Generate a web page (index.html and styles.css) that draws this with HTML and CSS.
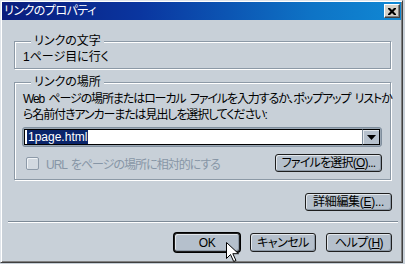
FILE: index.html
```html
<!DOCTYPE html>
<html lang="ja">
<head>
  <meta charset="UTF-8">
  <title>リンクのプロパティ</title>
  <link rel="stylesheet" href="styles.css">
</head>
<body>
  <div class="window">
    <div class="titlebar">
      <span class="title">リンクのプロパティ</span>
      <span class="close">
        <svg width="8" height="7" viewBox="0 0 8 7"><path d="M0 0h2l2 2 2-2h2v1l-2.5 2.5L8 6v1H6L4 5 2 7H0V6l2.5-2.5L0 1z" fill="#000"/></svg>
      </span>
    </div>

    <fieldset class="group group-text">
      <legend>リンクの文字</legend>
      <div class="group-value">1ページ目に行く</div>
    </fieldset>

    <fieldset class="group group-place">
      <legend>リンクの場所</legend>
      <p class="desc">Web ページの場所またはローカル ファイルを入力するか、ポップアップ リストか<br>ら名前付きアンカーまたは見出しを選択してください:</p>
      <div class="combo">
        <div class="combo-field"><span class="selected">1page.html</span></div>
        <span class="combo-btn">
          <svg width="9" height="5" viewBox="0 0 9 5"><path d="M0 0h9L4.5 5z" fill="#000"/></svg>
        </span>
      </div>
      <div class="option-row">
        <label class="check is-disabled"><span class="check-box"></span>URL をページの場所に相対的にする</label>
        <button class="btn btn-browse">ファイルを選択(<u>O</u>)...</button>
      </div>
    </fieldset>

    <div class="advanced-row">
      <button class="btn btn-advanced">詳細編集(<u>E</u>)...</button>
    </div>

    <div class="separator"></div>

    <div class="footer">
      <button class="btn btn-dialog btn-default">OK</button>
      <button class="btn btn-dialog">キャンセル</button>
      <button class="btn btn-dialog">ヘルプ(<u>H</u>)</button>
    </div>

    <!-- mouse pointer over the OK button -->
    <svg class="pointer" width="13" height="21" viewBox="0 0 13 21">
      <path d="M0.5 0.5v16l4-4 3.2 7 2.3-1-3.2-6.8h5.7z" fill="#fff" stroke="#000" stroke-width="1"/>
    </svg>
  </div>
</body>
</html>
```

FILE: styles.css
```css
* {
  box-sizing: border-box;
}

body {
  margin: 0;
  background-color: #c8d0d8;
  font-family: "Liberation Sans", "Noto Sans CJK JP", sans-serif;
  font-size: 12px;
  font-feature-settings: "palt";
  color: #000;
}

.window {
  position: relative;
  width: 403px;
  height: 263px;
  background-color: #c8d0d8;
  border: 1px solid;
  border-color: #dfe4ea #404040 #404040 #dfe4ea;
  box-shadow: inset 1px 1px #fff, inset -1px -1px #808080;
  padding: 1px;
  overflow: hidden;
}

.titlebar {
  display: flex;
  align-items: center;
  justify-content: space-between;
  height: 18px;
  padding: 0 1px 0 2px;
  background: linear-gradient(to right, #0a1c7c 0%, #0a36a0 35%, #0e74c6 78%, #1088d4 100%);
  color: #fff;
  line-height: 18px;
}

.title {
  letter-spacing: -0.5px;
}

.close {
  display: flex;
  align-items: center;
  justify-content: center;
  width: 16px;
  height: 14px;
  background-color: #d4d0c8;
  border: 1px solid;
  border-color: #fff #404040 #404040 #fff;
  box-shadow: inset -1px -1px #808080;
}

.group {
  margin: 0 0 0 12px;
  width: 377px;
  border: 1px solid #8c99a6;
  box-shadow: inset 1px 1px #fff, 1px 1px #fff;
  padding: 0 8px;
  min-width: 0;
}

.group legend {
  padding: 0 3px;
  margin-left: 8px;
  line-height: 14px;
  background-color: #c8d0d8;
}

.group-text {
  margin-top: 14px;
  padding-top: 2px;
  padding-bottom: 4px;
}

.group-value {
  line-height: 14px;
}

.group-place {
  margin-top: 6px;
  padding-top: 2px;
  padding-bottom: 7px;
}

.desc {
  margin: 0;
  line-height: 16px;
  white-space: nowrap;
  letter-spacing: -1.1px;
  word-spacing: 2px;
}

.combo {
  display: flex;
  align-items: center;
  margin: 4px 0 0 -1px;
  width: 360px;
  height: 20px;
  padding: 1px;
  border: 1px solid #7f8e9d;
  border-radius: 3px;
  background-color: #9aa7b4;
}

.combo-field {
  flex: 1;
  height: 16px;
  background-color: #fff;
  border: 1px solid #000;
  border-right: none;
  padding: 0 0 0 2px;
  line-height: 14px;
}

.selected {
  display: inline-block;
  background-color: #0a246a;
  color: #fff;
  padding: 0 1px;
}

.combo-btn {
  display: flex;
  align-items: center;
  justify-content: center;
  width: 18px;
  height: 16px;
  background-color: #b6c1cd;
  border: 1px solid #000;
  border-left-color: #7f8e9d;
  box-shadow: inset 1px 1px #e4e9ee;
}

.option-row {
  display: flex;
  align-items: center;
  justify-content: space-between;
  margin-top: 7px;
  height: 18px;
}

.check {
  display: flex;
  align-items: center;
  gap: 7px;
  margin-left: 3px;
  letter-spacing: -1px;
  word-spacing: 2px;
}

.check.is-disabled {
  color: #8796a6;
}

.check-box {
  width: 13px;
  height: 13px;
  border: 1px solid #8d9aa8;
  border-radius: 2px;
  background-color: #d2d9e0;
  box-shadow: inset 1px 1px #f0f3f6;
}

.btn {
  display: flex;
  align-items: center;
  justify-content: center;
  height: 18px;
  padding: 0;
  font: inherit;
  line-height: 14px;
  color: #000;
  background-color: #b5c0cc;
  border: 1px solid #1e1e1e;
  border-radius: 3px;
  box-shadow: inset 1px 1px #e2e7ec, inset -1px -1px #8d99a6;
}

.btn u {
  text-decoration-thickness: 1px;
  text-underline-offset: 1px;
}

.btn-browse {
  width: 107px;
  letter-spacing: -0.8px;
}

.advanced-row {
  display: flex;
  justify-content: flex-end;
  width: 390px;
  margin-top: 13px;
}

.btn-advanced {
  width: 87px;
  letter-spacing: -0.3px;
}

.separator {
  width: 390px;
  margin: 10px 0 0 6px;
  height: 2px;
  border-top: 1px solid #7d8a97;
  border-bottom: 1px solid #fff;
}

.footer {
  display: flex;
  align-items: center;
  justify-content: flex-end;
  gap: 10px;
  width: 390px;
  margin-top: 10px;
}

.btn-dialog {
  width: 66px;
  height: 19px;
  letter-spacing: -0.5px;
}

.btn-default {
  box-shadow: 0 0 0 1px #000, inset 1px 1px #e2e7ec, inset -1px -1px #8d99a6;
}

.pointer {
  position: absolute;
  left: 225px;
  top: 241px;
}
```
